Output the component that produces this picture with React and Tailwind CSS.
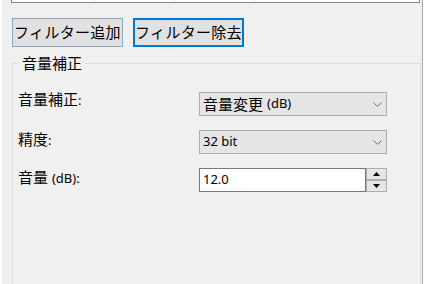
import React from "react";

const latin = "text-[13px] font-['Noto_Sans']";

function Chevron() {
  return (
    <svg width="9" height="5" viewBox="0 0 9 5" className="mr-[4px]">
      <path d="M0.5 0.5 L4.5 4.5 L8.5 0.5" fill="none" stroke="#6b6b6b" strokeWidth="1" />
    </svg>
  );
}

function Combo({ children }) {
  return (
    <div className="w-[188px] h-[24px] border border-[#adadad] bg-[#e5e5e5] flex items-center justify-between pl-[3px]">
      <div className="flex items-center">{children}</div>
      <Chevron />
    </div>
  );
}

function SpinButton({ up }) {
  return (
    <div className="w-[21px] h-[12px] border border-[#adadad] bg-[#e5e5e5] flex items-center justify-center">
      <svg width="7" height="4" viewBox="0 0 7 4">
        {up ? <path d="M0 4 L3.5 0 L7 4 Z" fill="#000" /> : <path d="M0 0 L3.5 4 L7 0 Z" fill="#000" />}
      </svg>
    </div>
  );
}

export default function App() {
  return (
    <div className="w-[425px] h-[284px] bg-white flex overflow-hidden font-['Noto_Sans','Noto_Sans_CJK_JP',sans-serif] text-[15px] text-black">
      <div className="ml-[2px] w-[421px] h-full bg-[#f0f0f0] border-r border-[#a8a8a8] flex flex-col">

        {/* list view tail */}
        <div className="ml-[9px] w-[409px] h-[3px] bg-white border-l border-r border-b border-[#828790] flex">
          <div className="w-[82px] border-r border-[#e5e5e5]"></div>
          <div className="w-[80px] border-r border-[#e5e5e5]"></div>
          <div className="w-[80px] border-r border-[#e5e5e5]"></div>
        </div>

        {/* buttons */}
        <div className="flex gap-[10px] ml-[10px] mt-[15px]">
          <button className="w-[111px] h-[29px] border border-[#8da7c0] bg-[#e1e1e1] flex items-center justify-center leading-none tracking-[0.3px]">
            フィルター追加
          </button>
          <button className="w-[111px] h-[29px] border-2 border-[#0078d7] bg-[#e1e1e1] flex items-center justify-center leading-none tracking-[0.3px]">
            フィルター除去
          </button>
        </div>

        {/* group box */}
        <div className="relative ml-[10px] mt-[16px] w-[409px] flex-1 border-l border-t border-r border-[#dcdcdc] pt-[28px] pl-[5px]">
          <span className="absolute left-[6px] top-[-9px] px-[3px] bg-[#f0f0f0] leading-[16px]">
            音量補正
          </span>

          <div className="flex flex-col gap-[14px]">
            <div className="flex items-start h-[24px]">
              <div className="w-[181px] leading-[15px]">
                音量補正<span className={latin}>:</span>
              </div>
              <Combo>
                <span className="leading-none">音量変更</span>
                <span className={latin + " ml-[4px]"}>(dB)</span>
              </Combo>
            </div>

            <div className="flex items-start h-[24px]">
              <div className="w-[181px] leading-[18px]">
                精度<span className={latin}>:</span>
              </div>
              <Combo>
                <span className={latin}>32 bit</span>
              </Combo>
            </div>

            <div className="flex items-start h-[24px]">
              <div className="w-[181px] leading-[18px]">
                音量 <span className={latin}>(dB):</span>
              </div>
              <div className="flex">
                <div className="w-[167px] h-[24px] bg-white border border-[#7a7a7a] flex items-center pl-[3px]">
                  <span className={latin}>12.0</span>
                </div>
                <div className="flex flex-col">
                  <SpinButton up />
                  <SpinButton />
                </div>
              </div>
            </div>
          </div>
        </div>

      </div>
    </div>
  );
}
